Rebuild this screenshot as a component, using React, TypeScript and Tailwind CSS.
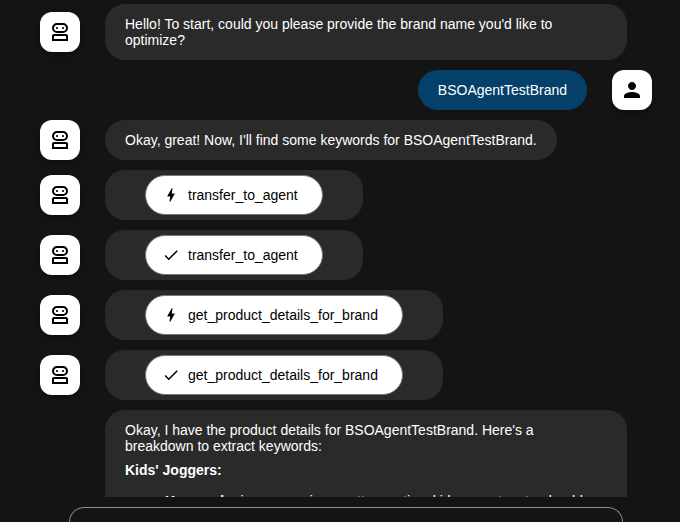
import type { ReactNode } from "react";

function RobotIcon() {
  return (
    <svg viewBox="0 -960 960 960" className="size-6" fill="currentColor" aria-hidden="true">
      <path d="M160-120v-200q0-33 23.500-56.500T240-400h480q33 0 56.500 23.500T800-320v200H160Zm200-320q-83 0-141.500-58.500T160-640q0-83 58.500-141.500T360-840h240q83 0 141.500 58.500T800-640q0 83-58.500 141.500T600-440H360ZM240-200h480v-120H240v120Zm120-320h240q50 0 85-35t35-85q0-50-35-85t-85-35H360q-50 0-85 35t-35 85q0 50 35 85t85 35Zm0-80q17 0 28.500-11.500T400-640q0-17-11.500-28.500T360-680q-17 0-28.500 11.500T320-640q0 17 11.500 28.500T360-600Zm240 0q17 0 28.500-11.500T640-640q0-17-11.500-28.500T600-680q-17 0-28.500 11.500T560-640q0 17 11.500 28.500T600-600Z" />
    </svg>
  );
}

function PersonIcon() {
  return (
    <svg viewBox="0 0 24 24" className="size-6" fill="currentColor" aria-hidden="true">
      <path d="M12 12c2.210 0 4-1.790 4-4s-1.790-4-4-4-4 1.790-4 4 1.790 4 4 4zm0 2c-2.670 0-8 1.340-8 4v2h16v-2c0-2.660-5.330-4-8-4z" />
    </svg>
  );
}

function BoltIcon() {
  return (
    <svg viewBox="0 0 24 24" className="size-[18px]" fill="currentColor" aria-hidden="true">
      <path d="M11 21h-1l1-7H7.500c-.58 0-.57-.32-.38-.66.190-.34.050-.080.070-.12C8.480 10.940 10.420 7.540 13 3h1l-1 7h3.500c.49 0 .56.330.470.510l-.070.150C12.960 17.550 11 21 11 21z" />
    </svg>
  );
}

function CheckIcon() {
  return (
    <svg viewBox="0 0 24 24" className="size-[18px]" fill="currentColor" aria-hidden="true">
      <path d="M9 16.170 4.830 12l-1.420 1.410L9 19 21 7l-1.410-1.410z" />
    </svg>
  );
}

function Avatar({ label, children }: { label: string; children: ReactNode }) {
  return (
    <button
      type="button"
      aria-label={label}
      className="flex size-10 shrink-0 items-center justify-center rounded-xl bg-white text-black shadow-[0_3px_6px_rgba(0,0,0,0.3)]"
    >
      {children}
    </button>
  );
}

function BotMessage({ children }: { children: ReactNode }) {
  return (
    <div className="flex items-center gap-[25px]">
      <Avatar label="Agent">
        <RobotIcon />
      </Avatar>
      <div className="max-w-[522px] rounded-[20px] bg-[#2a2a2a] px-5 py-3">{children}</div>
    </div>
  );
}

function UserMessage({ children }: { children: ReactNode }) {
  return (
    <div className="flex items-center justify-end gap-[25px]">
      <div className="max-w-[522px] rounded-[20px] bg-[#05406a] px-5 py-3">{children}</div>
      <Avatar label="You">
        <PersonIcon />
      </Avatar>
    </div>
  );
}

function ToolEvent({ name, done = false }: { name: string; done?: boolean }) {
  return (
    <div className="flex items-center gap-[25px]">
      <Avatar label="Agent">
        <RobotIcon />
      </Avatar>
      <div className="rounded-[20px] bg-[#2a2a2a] px-10 py-[5px]">
        <button
          type="button"
          className="flex h-10 items-center gap-2 rounded-full border border-[#747775] bg-white pr-6 pl-4 text-black"
        >
          {done ? <CheckIcon /> : <BoltIcon />}
          {name}
        </button>
      </div>
    </div>
  );
}

export default function App() {
  return (
    <div className="flex h-screen flex-col overflow-hidden bg-[#141414] font-['Liberation_Sans',Arial,sans-serif] text-sm leading-4 text-white">
      <main className="mb-[10px] flex min-h-0 flex-1 flex-col gap-[10px] overflow-hidden pt-1 pr-7 pl-10 *:shrink-0">
        <BotMessage>Hello! To start, could you please provide the brand name you'd like to optimize?</BotMessage>
        <UserMessage>BSOAgentTestBrand</UserMessage>
        <BotMessage>Okay, great! Now, I'll find some keywords for BSOAgentTestBrand.</BotMessage>
        <ToolEvent name="transfer_to_agent" />
        <ToolEvent name="transfer_to_agent" done />
        <ToolEvent name="get_product_details_for_brand" />
        <ToolEvent name="get_product_details_for_brand" done />
        <BotMessage>
          <div className="min-h-72">
            <p className="mb-2 pr-2">
              Okay, I have the product details for BSOAgentTestBrand. Here's a breakdown to extract keywords:
            </p>
            <p className="mb-[15px] font-bold">Kids' Joggers:</p>
            <ul className="list-disc pl-10">
              <li>
                <b>Keywords:</b> joggers, unisex, cotton, active, kids, sweatpants, durable
              </li>
            </ul>
          </div>
        </BotMessage>
      </main>
      <footer className="flex pr-[57px] pl-[69px]">
        <textarea
          aria-label="Message"
          className="h-[15px] w-full resize-none overflow-hidden rounded-t-2xl border border-b-0 border-[#8e918f] bg-transparent px-4 text-white outline-none"
        />
      </footer>
    </div>
  );
}
